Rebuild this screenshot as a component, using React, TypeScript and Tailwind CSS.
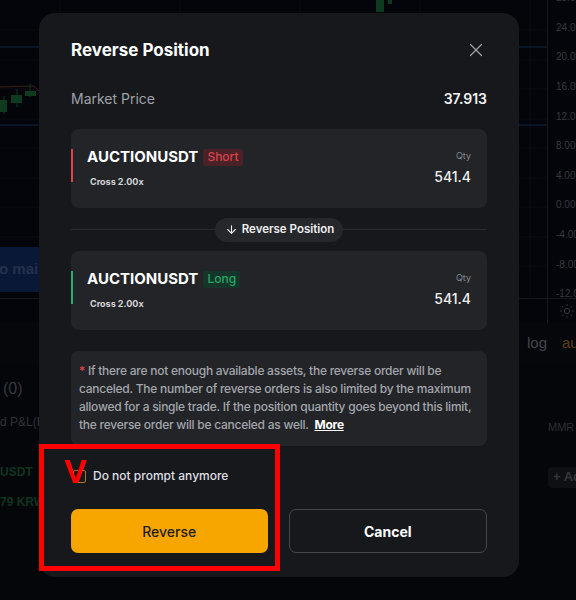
import React from 'react'
import { ArrowDown, X, Sun } from 'lucide-react'

const prices = ['28.00', '24.00', '20.00', '16.00', '12.00', '8.000', '4.000', '0.000', '-4.00', '-8.00', '-12.0']

const ChartBackdrop = () => (
    <div className="flex h-full w-full flex-col bg-[#04050a] font-['Liberation_Sans',sans-serif]">
        {/* chart + price axis */}
        <div className="flex h-[298px]">
            <div className="relative flex flex-1 flex-col justify-end overflow-hidden pb-[6px]">
                <svg className="absolute inset-0" width="547" height="298" viewBox="0 0 547 298">
                    {[30, 60, 89, 119, 148, 178, 207, 237, 266].map((y) => (
                        <line key={y} x1="0" x2="547" y1={y} y2={y} stroke="#0b0d12" strokeWidth="1" />
                    ))}
                    {[60, 180, 300, 420, 530].map((x) => (
                        <line key={x} x1={x} x2={x} y1="0" y2="298" stroke="#0b0d12" strokeWidth="1" />
                    ))}
                    <line x1="0" x2="547" y1="47" y2="47" stroke="#0f2440" strokeWidth="1" />
                    <polyline points="0,87 34,86 40,92 120,95" fill="none" stroke="#3a2310" strokeWidth="1" />
                    <line x1="0" x2="547" y1="125" y2="125" stroke="#0f2440" strokeWidth="1" />
                    <line x1="4" x2="4" y1="96" y2="114" stroke="#0e3a1f" />
                    <rect x="0" y="100" width="7" height="12" fill="#0e3a1f" />
                    <line x1="17" x2="17" y1="89" y2="107" stroke="#0e3a1f" />
                    <rect x="11" y="95" width="11" height="8" fill="#0e3a1f" />
                    <line x1="30" x2="30" y1="84" y2="97" stroke="#0e3a1f" />
                    <rect x="25" y="91" width="11" height="5" fill="#0e3a1f" />
                    <rect x="376" y="0" width="8" height="12" fill="#0e3a1f" />
                    <rect x="388" y="0" width="4" height="4" fill="#0e3a1f" />
                </svg>
                <div className="relative flex h-[45px] w-[140px] items-center whitespace-nowrap bg-[#0a1838] text-[15px] font-bold text-[#243149]">
                    <span className="-ml-[6px]">to main</span>
                </div>
            </div>
            <div className="flex w-[29px] flex-col overflow-hidden border-l border-[#16181d] pl-[8px] text-[10px] text-[#363940]">
                <div className="-mt-[17px] flex flex-col">
                    {prices.map((p) => (
                        <div key={p} className="flex h-[29.6px] items-center whitespace-nowrap">{p}</div>
                    ))}
                </div>
            </div>
        </div>
        {/* time axis */}
        <div className="flex h-[25px] border-t border-[#16181d]">
            <div className="flex-1" />
            <div className="flex w-[29px] items-center overflow-hidden border-l border-[#16181d] pl-[11px] text-[#34373d]">
                <Sun size={16} strokeWidth={1.5} className="shrink-0" />
            </div>
        </div>
        {/* toolbar */}
        <div className="flex h-[40px] items-center justify-end gap-[15px] bg-[#06070b] text-[15px] whitespace-nowrap">
            <span className="text-[#43464c]">log</span>
            <span className="w-[14px] overflow-hidden text-[#5a4010]">auto</span>
        </div>
        {/* positions panel */}
        <div className="flex flex-1 justify-between bg-[#05060a]">
            <div className="flex flex-col whitespace-nowrap">
                <span className="mt-[14px] pl-[3px] text-[16px] text-[#34373d]">(0)</span>
                <span className="mt-[12px] text-[12px] text-[#2f3237]">d P&amp;L(ROI)</span>
                <span className="mt-[32px] text-[12px] font-bold text-[#0e3520]">USDT</span>
                <span className="mt-[12px] text-[12px] font-bold text-[#0e3520]">79 KRW</span>
            </div>
            <div className="flex w-[28px] flex-col overflow-hidden whitespace-nowrap">
                <span className="mt-[56px] text-[11px] text-[#2c2f34]">MMR</span>
                <div className="mt-[31px] flex h-[21px] w-[40px] items-center gap-[2px] rounded-[4px] bg-[#0e1014] pl-[5px] text-[13px] font-bold text-[#34373c]">
                    + Add
                </div>
            </div>
        </div>
    </div>
)

const PositionCard = ({ side }: { side: 'Short' | 'Long' }) => {
    const isShort = side === 'Short'
    return (
        <div className="flex h-[79px] rounded-[8px] bg-[#222428]">
            <div className={`mt-[20px] h-[33px] w-[2px] ${isShort ? 'bg-[#e2434b]' : 'bg-[#20b26c]'}`} />
            <div className="flex flex-1 justify-between pl-[14px] pr-[16px]">
                <div className="flex flex-col">
                    <div className="mt-[19px] flex h-[18px] items-center gap-[5px]">
                        <span className="text-[15px] font-bold text-white">AUCTIONUSDT</span>
                        <span
                            className={`flex h-[17px] items-center rounded-[3px] px-[4px] text-[12px] font-medium ${
                                isShort ? 'bg-[#4a2126] text-[#d9434c]' : 'bg-[#16352a] text-[#25a663]'
                            }`}
                        >
                            {side}
                        </span>
                    </div>
                    <span className="mt-[9px] ml-[3px] text-[9px] font-bold text-[#d4d5d8]">Cross 2.00x</span>
                </div>
                <div className="flex flex-col items-end">
                    <span className="mt-[20px] text-[9px] text-[#86898f]">Qty</span>
                    <span className="mt-[3px] text-[14px] font-medium text-[#f0f0f0]">541.4</span>
                </div>
            </div>
        </div>
    )
}

export default function App() {
    return (
        <div className="relative h-[600px] w-[576px] overflow-hidden bg-[#04050a] font-['Inter',sans-serif]">
            <ChartBackdrop />

            {/* Modal */}
            <div className="absolute left-[39px] top-[13px] flex h-[564px] w-[480px] flex-col rounded-[16px] bg-[#17181c] px-[32px] pt-[25px]">
                <div className="flex h-[26px] items-center justify-between">
                    <h2 className="text-[17px] font-bold text-white">Reverse Position</h2>
                    <X size={22} strokeWidth={1.4} className="-mt-[2px] text-[#9b9ea3]" />
                </div>

                <div className="mt-[24px] flex h-[20px] items-center justify-between text-[14px]">
                    <span className="text-[#9fa2a7]">Market Price</span>
                    <span className="font-semibold text-[#f2f2f2]">37.913</span>
                </div>

                <div className="mt-[21px]">
                    <PositionCard side="Short" />
                </div>

                <div className="flex h-[43px] items-center">
                    <div className="h-px flex-1 bg-[#2a2c31]" />
                    <div className="flex h-[24px] items-center gap-[4px] rounded-full bg-[#25272b] pl-[10px] pr-[9px] text-[11.5px] font-semibold text-[#eeeeee]">
                        <ArrowDown size={13} strokeWidth={2} />
                        Reverse Position
                    </div>
                    <div className="h-px flex-1 bg-[#2a2c31]" />
                </div>

                <PositionCard side="Long" />

                <div className="mt-[21px] h-[95px] rounded-[8px] bg-[#222428] pl-[8px] pr-[6px] pt-[11px] text-[12px] font-medium leading-[18px] tracking-[-0.25px] text-[#a3a6ab]">
                    <span className="text-[#e2434b]">* </span>
                    If there are not enough available assets, the reverse order will be canceled. The number of reverse orders is also limited by the maximum allowed for a single trade. If the position quantity goes beyond this limit, the reverse order will be canceled as well.{' '}
                    <span className="ml-[3px] font-bold text-white underline">More</span>
                </div>

                <div className="mt-[20px] flex h-[20px] items-center gap-[7px] pl-[2px]">
                    <div className="h-[13px] w-[13px] rounded-[2px] border border-[#a8782a]" />
                    <span className="text-[12px] font-medium text-[#dedfe1]">Do not prompt anymore</span>
                </div>

                <div className="mt-[23px] flex gap-[21px]">
                    <button className="h-[44px] flex-1 rounded-[7px] bg-[#f7a600] text-[14px] font-medium text-[#1d1d1d]">
                        Reverse
                    </button>
                    <button className="h-[44px] flex-1 rounded-[7px] border border-[#46474c] text-[14px] font-bold text-white">
                        Cancel
                    </button>
                </div>
            </div>

            {/* Annotation */}
            <div className="pointer-events-none absolute left-[39px] top-[444px] h-[127px] w-[241px] border-[5px] border-[#ff0000]" />
            <span className="pointer-events-none absolute left-[64px] top-[454px] font-['Liberation_Sans',sans-serif] text-[34px] font-bold leading-[34px] text-[#ff0000]">
                V
            </span>
        </div>
    )
}
